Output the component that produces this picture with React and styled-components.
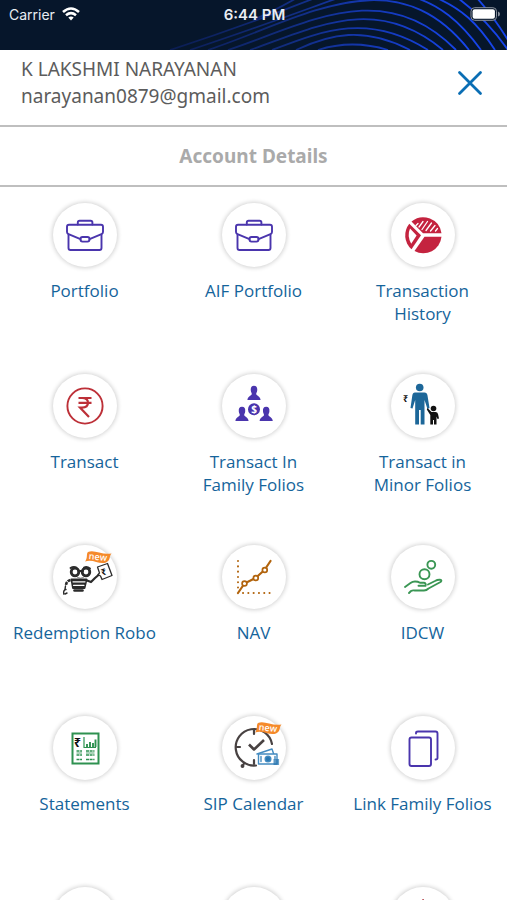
import React from "react";
import styled, { createGlobalStyle } from "styled-components";

const GlobalStyle = createGlobalStyle`
  * {
    box-sizing: border-box;
  }

  body {
    margin: 0;
    background-color: #fff;
    font-family: "Open Sans", "Noto Sans", sans-serif;
  }
`;

const Page = styled.div`
  height: 100vh;
  overflow: hidden;
`;

const TopBar = styled.div`
  position: relative;
  height: 50px;
  background-color: #06162b;
`;

const Waves = styled.svg`
  position: absolute;
  top: 0;
  right: 0;
  width: 100%;
  height: 50px;
`;

const StatusBar = styled.div`
  position: relative;
  display: grid;
  grid-template-columns: 1fr auto 1fr;
  align-items: center;
  height: 28px;
  padding: 0 7px 0 9px;
  color: #e9edf3;
  font-family: Inter, sans-serif;
  font-size: 14px;
`;

const Carrier = styled.div`
  display: flex;
  align-items: center;
  gap: 7px;
`;

const Time = styled.div`
  font-size: 15px;
  font-weight: 600;
`;

const Battery = styled.svg`
  justify-self: end;
`;

const Header = styled.header`
  display: flex;
  justify-content: space-between;
  align-items: center;
  height: 77px;
  padding: 0 20px 10px 21px;
  border-bottom: 2px solid #bfbfbf;
`;

const User = styled.div`
  color: #5c5c5c;
  font-family: "Noto Sans", sans-serif;
  font-size: 19px;
  line-height: 27px;
`;

const CloseButton = styled.button`
  display: flex;
  padding: 4px;
  background: none;
  border: none;
  cursor: pointer;
`;

const Title = styled.h1`
  margin: 0;
  padding: 16px 0;
  border-bottom: 2px solid #bfbfbf;
  color: #aaa;
  font-family: "Noto Sans", sans-serif;
  font-size: 19px;
  font-weight: 700;
  line-height: 26px;
  text-align: center;
`;

const Menu = styled.nav`
  display: grid;
  grid-template-columns: repeat(3, 1fr);
  grid-auto-rows: 171px;
  padding-top: 16px;
`;

const Tile = styled.a`
  display: flex;
  flex-direction: column;
  align-items: center;
  gap: 12px;
  color: #15649b;
  font-size: 17px;
  line-height: 23px;
  text-align: center;
  text-decoration: none;
`;

const Circle = styled.span`
  display: block;
  width: 64px;
  height: 64px;
  border-radius: 50%;
  background-color: #fff;
  box-shadow: 0 0 4px 1px #d2d2d2;
`;

const Drawing = styled.svg`
  display: block;
  overflow: visible;
`;

const Label = styled.span`
  white-space: pre-line;
`;

const Icon = ({ children, color }) => (
  <Drawing
    width="64"
    height="64"
    viewBox="0 0 64 64"
    fill="none"
    stroke={color}
    strokeWidth="1.9"
    strokeLinecap="round"
    strokeLinejoin="round"
    aria-hidden="true"
  >
    {children}
  </Drawing>
);

const NewRibbon = ({ x, y }) => (
  <g transform={`translate(${x} ${y})`} stroke="none">
    <path d="M3 1C9-2 16 4 26.5 2.5C24 5 26 9 21 11.5C14 14 8 7.5 0 10.5C3 7 1 3 3 1Z" fill="#f58a2b" />
    <text
      x="13"
      y="9"
      fill="#fff"
      fontFamily="Open Sans, sans-serif"
      fontSize="9"
      fontWeight="600"
      textAnchor="middle"
      transform="rotate(6 13 6)"
    >
      new
    </text>
  </g>
);

const Rupee = ({ x, y, size }) => (
  <text
    x={x}
    y={y}
    fill="#111"
    stroke="none"
    fontFamily="Noto Sans, sans-serif"
    fontSize={size}
    fontWeight="700"
  >
    ₹
  </text>
);

const BriefcaseIcon = () => (
  <Icon color="#4a35ad">
    <path d="M24.8 21.5V19.5Q24.8 17.7 26.6 17.7H37.6Q39.4 17.7 39.4 19.5V21.5" />
    <path d="M27.5 36.2L15.5 31.2Q14 30.5 14 29V23.8Q14 21.8 16 21.8H48Q50 21.8 50 23.8V29Q50 30.5 48.5 31.2L36.5 36.2" />
    <path d="M15.5 31.5V45Q15.5 47 17.5 47H46.5Q48.5 47 48.5 45V31.5" />
    <rect x="27.5" y="34" width="9" height="4.6" rx="2" />
  </Icon>
);

const PieIcon = () => (
  <Icon color="none">
    <path d="M32 30.2L20.5 18.5A18.5 18.5 0 0 1 50.5 30.2Z" fill="#c4233f" />
    <path d="M33.5 33.8H50.5A18.3 18.3 0 0 1 23.5 48Z" fill="#c4233f" />
    <path d="M18.3 20.8L30 32.2L20.5 46.2A18.3 18.3 0 0 1 18.3 20.8Z" fill="#c4233f" />
    <path d="M19 25.5L25.6 32.4L20.2 40.8Q15.8 33 19 25.5Z" fill="#fff" />
    <path
      d="M27 20.5L25 22.5M32 18.5L28 24M36.5 18.5L31 26.5M40.5 20L35 27.5M44 22.5L39.5 28M46.5 25.5L44.5 28"
      stroke="#fff"
      strokeWidth="1.3"
    />
  </Icon>
);

const TransactIcon = () => (
  <Icon color="#bd3038">
    <circle cx="32" cy="32" r="17.6" />
    <path
      d="M25.5 24H38.5M25.5 28.8H38.5M26 24H29Q35 24 35 28.8Q35 33.6 29 33.6H27L36 43"
      strokeWidth="2.2"
      strokeLinecap="butt"
      strokeLinejoin="miter"
    />
  </Icon>
);

const PERSON =
  "M0-7.5C2.6-7.5 3.5-5.4 3.2-2.8C3-1 2.2-.6 2.2 .8C2.2 2.6 6 2.4 6.6 6.8H-6.6C-6 2.4-2.2 2.6-2.2 .8C-2.2-.6-3-1-3.2-2.8C-3.5-5.4-2.6-7.5 0-7.5Z";

const FamilyIcon = () => (
  <Icon color="none">
    <g fill="#4a35ad">
      <path d={PERSON} transform="translate(32 19.2)" />
      <path d={PERSON} transform="translate(20 40.2)" />
      <path d={PERSON} transform="translate(44.2 40.2)" />
      <circle cx="32" cy="35.3" r="6" />
    </g>
    <text
      x="32"
      y="39"
      fill="#fff"
      fontFamily="Noto Sans, sans-serif"
      fontSize="10"
      fontWeight="700"
      textAnchor="middle"
    >
      $
    </text>
  </Icon>
);

const MinorIcon = () => (
  <Icon color="none">
    <g fill="#1d6799">
      <circle cx="28.7" cy="13.5" r="3.8" />
      <path d="M24 18.5H33.5Q36 18.5 36.5 21.5L38.5 34L36.5 35L33.5 26V50.5H29.7V36H28V50.5H24.2V26L21.5 34.5L19.5 34L21.3 21.5Q21.7 18.5 24 18.5Z" />
    </g>
    <g fill="#111">
      <circle cx="42.5" cy="34.5" r="2.8" />
      <path d="M36.5 34L40.5 38H44.5Q46.5 38 47 40L48 44.5L46.5 45L45.5 42.5V50.5H43V46H42V50.5H39.3V41L35.8 35.5Z" />
    </g>
    <Rupee x="12" y="28" size="9" />
  </Icon>
);

const RoboIcon = () => (
  <Icon color="#2b2b2b">
    <circle cx="22" cy="27" r="3.8" strokeWidth="2.8" />
    <circle cx="33" cy="27" r="3.8" strokeWidth="2.8" />
    <path d="M25.5 26H30M17.5 23Q20.5 21 23.5 22.5M31 22.5Q34 21 37 23.5" />
    <path d="M24.5 32.5Q27.5 34 30.5 32.5" stroke="#8a8a8a" strokeWidth="1" />
    <path d="M18.5 34.5H33.5L31.5 43H20Z" fill="#2b2b2b" />
    <path d="M20 36.8H32M20.5 40.3H31" stroke="#fff" strokeWidth="1.2" />
    <path d="M21.5 45.5H29.5" strokeWidth="2.6" />
    <path d="M17.5 35Q13.5 36 13 40" strokeWidth="2.6" strokeDasharray="3 1" strokeLinecap="butt" />
    <path d="M12.5 41L12 44M10.8 49Q10 45 13 44.5M12 49L14 48" strokeWidth="1.4" />
    <path d="M34 35.5L38 37L42 33L45.5 30M38 37L40 35" strokeWidth="2.2" />
    <path d="M44.5 22L54.5 18.5L59 30.5L49 34.5L47.5 31L45 29.5L46.5 28Z" fill="#fff" strokeWidth="1.3" />
    <g transform="rotate(-20 51 26)">
      <Rupee x="48" y="30" size="9" />
    </g>
    <NewRibbon x="32" y="6" />
  </Icon>
);

const NavIcon = () => (
  <Icon color="#b2640d">
    <path d="M16 16V44M21 48H50" strokeDasharray="0.1 5.2" strokeWidth="2" />
    <path d="M16 48L22.5 38.5L33.5 33L42.5 25L48.5 16" strokeWidth="2.2" />
    <g fill="#fff" strokeWidth="1.7">
      <circle cx="22.5" cy="38.5" r="2.4" />
      <circle cx="33.8" cy="33" r="2.4" />
      <circle cx="42.8" cy="25" r="2.4" />
    </g>
  </Icon>
);

const IdcwIcon = () => (
  <Icon color="#3a9654">
    <circle cx="40.3" cy="19.8" r="3.9" />
    <circle cx="33.5" cy="29.3" r="5" />
    <path d="M14 42L19.5 38Q21.5 36.5 24 36.5Q27 36.5 29 37.8H33Q35.5 38.3 34.5 40.8H27.5" />
    <path d="M18 48L20 46Q21.5 45 24 45.5H33Q35.5 45.5 37.5 43.5L49.5 37Q51.5 35 49 34.7Q46.5 34.5 44 36L37 39.5" />
  </Icon>
);

const StatementIcon = () => (
  <Icon color="#2e9150">
    <rect x="19.5" y="17.5" width="26" height="30" strokeWidth="2" strokeLinejoin="miter" />
    <Rupee x="21" y="31" size="12" />
    <g strokeLinecap="butt">
      <path d="M31 21V31.5H43" strokeWidth="1.2" />
      <path d="M34 31V28M37 31V26M40 31V27M42.5 31V23.5" />
      <path d="M23.5 35H29M23.5 39H29M23.5 43.5H29M33 35H41.5M33 39H41.5M33 43.5H41.5" strokeWidth="1.4" strokeDasharray="3 0.6" />
      <path d="M23.5 37H29M33 37H41.5" strokeWidth="0.8" />
    </g>
  </Icon>
);

const CalendarIcon = () => (
  <Icon color="#484242">
    <path d="M34 49.5A18.3 18.3 0 1 1 50 28" strokeWidth="2.2" />
    <path d="M32 14V18M14.5 31H18M32 44V48M22 47.5L20.5 50" strokeWidth="2.2" />
    <path d="M27 28.5L32 33.5L42 24" strokeWidth="2.6" strokeLinecap="butt" />
    <circle cx="20.5" cy="50" r="1" />
    <g stroke="#438bc0" fill="#fff" strokeWidth="1.4">
      <path d="M35 38L50 33L53 42" />
      <rect x="36.5" y="38" width="18.5" height="10" />
      <circle cx="46" cy="43" r="2.8" fill="#2876b0" />
      <path d="M39 40.5V45.5M53 40.5V43" />
      <path d="M52 44H56.5M52 46H56.5M52 48H56.5" stroke="#2876b0" />
    </g>
    <NewRibbon x="33" y="6" />
  </Icon>
);

const LinkIcon = () => (
  <Icon color="#4a35ad">
    <rect x="18.5" y="21.5" width="21.5" height="28.5" rx="2" />
    <path d="M25 17.5V17Q25 15.5 27 15.5H44.5Q46.5 15.5 46.5 17.5V42Q46.5 43.5 44.5 43.5" />
  </Icon>
);

const PinIcon = () => (
  <Icon color="#b8535a">
    <circle cx="32" cy="12.8" r="0.4" strokeWidth="1" />
  </Icon>
);

const items = [
  { label: "Portfolio", icon: BriefcaseIcon },
  { label: "AIF Portfolio", icon: BriefcaseIcon },
  { label: "Transaction\nHistory", icon: PieIcon },
  { label: "Transact", icon: TransactIcon },
  { label: "Transact In\nFamily Folios", icon: FamilyIcon },
  { label: "Transact in\nMinor Folios", icon: MinorIcon },
  { label: "Redemption Robo", icon: RoboIcon },
  { label: "NAV", icon: NavIcon },
  { label: "IDCW", icon: IdcwIcon },
  { label: "Statements", icon: StatementIcon },
  { label: "SIP Calendar", icon: CalendarIcon },
  { label: "Link Family Folios", icon: LinkIcon },
  {},
  {},
  { icon: PinIcon },
];

const waves = [
  "M318 50Q352 39 388 50",
  "M296 50C330 34 364 26 410 50",
  "M272 50C322 31 368 12 428 50",
  "M250 50C316 27 376-6 443 50",
  "M228 50C306 24 384-24 456 50",
  "M208 50C304 18 394-44 469 50",
  "M190 50C280 20 325 2 350-6M402-6C440 2 462 24 481 50",
  "M170 50C250 24 290 8 325-6M432-4C462 8 478 24 495 50",
  "M253 20Q280 8 300-4M455-4Q486 18 508 50",
  "M475-4Q494 16 514 50",
];

const App = () => (
  <Page>
    <GlobalStyle />
    <TopBar>
      <Waves viewBox="0 0 507 50" preserveAspectRatio="xMaxYMid slice" fill="none" aria-hidden="true">
        <defs>
          <linearGradient id="wave" gradientUnits="userSpaceOnUse" x1="165" y1="0" x2="460" y2="0">
            <stop offset="0" stopColor="#0a1c50" />
            <stop offset="0.4" stopColor="#112c7c" />
            <stop offset="1" stopColor="#1644ea" />
          </linearGradient>
        </defs>
        {waves.map((d) => (
          <path key={d} d={d} stroke="url(#wave)" strokeWidth="1.8" />
        ))}
      </Waves>
      <StatusBar>
        <Carrier>
          Carrier
          <svg width="18" height="14" viewBox="0 0 18 14" fill="none" stroke="#fff" strokeWidth="2.6" aria-hidden="true">
            <path d="M1 5Q9-2 17 5M4 8.2Q9 4 14 8.2" />
            <path d="M6.3 10.6Q9 8.4 11.7 10.6L9 13.4Z" fill="#fff" stroke="none" />
          </svg>
        </Carrier>
        <Time>6:44 PM</Time>
        <Battery width="30" height="14" viewBox="0 0 30 14" aria-hidden="true">
          <rect x="1" y="0.7" width="25.5" height="12.6" rx="3.6" fill="#06162b" stroke="#8a919c" />
          <rect x="2.6" y="2.3" width="22.3" height="9.4" rx="2" fill="#fff" />
          <path d="M28 4.5Q30 5 30 7T28 9.5Z" fill="#8a919c" />
        </Battery>
      </StatusBar>
    </TopBar>
    <Header>
      <User>
        <div>K LAKSHMI NARAYANAN</div>
        <div>narayanan0879@gmail.com</div>
      </User>
      <CloseButton type="button">
        <svg width="26" height="26" viewBox="0 0 26 26" fill="none" stroke="#0a6eb4" strokeWidth="2.8" aria-hidden="true">
          <path d="M2.5 2.5L23.5 23.5M23.5 2.5L2.5 23.5" strokeLinecap="round" />
        </svg>
      </CloseButton>
    </Header>
    <Title>Account Details</Title>
    <Menu>
      {items.map(({ label, icon: TileIcon }, index) => (
        <Tile key={index} href="#">
          <Circle>{TileIcon && <TileIcon />}</Circle>
          {label && <Label>{label}</Label>}
        </Tile>
      ))}
    </Menu>
  </Page>
);

export default App;
